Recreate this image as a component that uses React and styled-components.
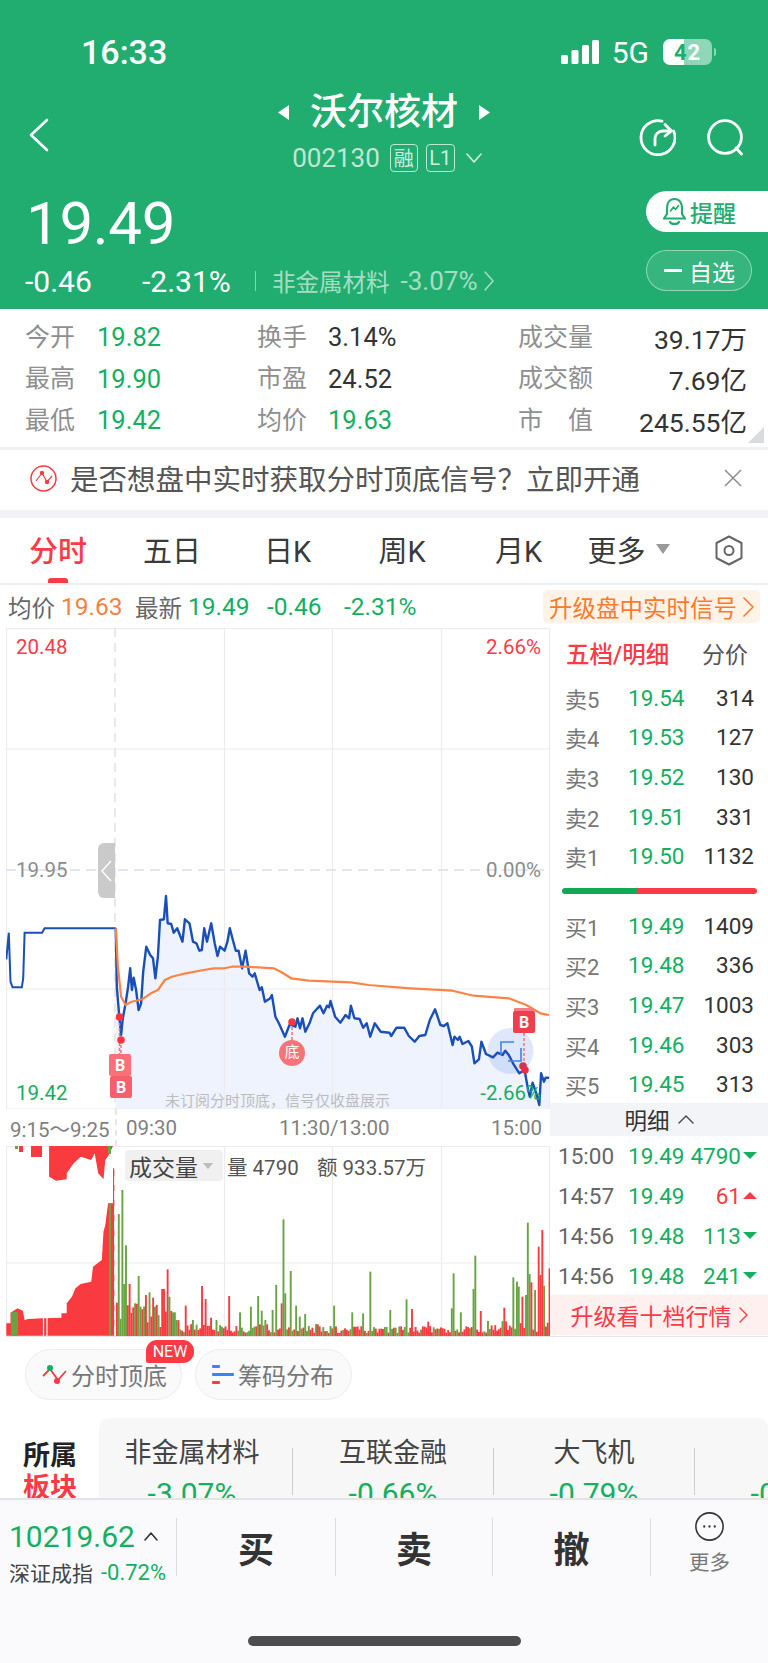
import React from "react";
import styled, { createGlobalStyle } from "styled-components";

const GREEN = "#12b05f";
const RED = "#fb3a46";
const HEADER = "#21ad70";

const GlobalStyle = createGlobalStyle`
  html, body { margin: 0; padding: 0; background: #fff; }
  body { font-family: Roboto, "Noto Sans CJK SC", sans-serif; }
`;

// chart traces, read off the 2.85x / 3x crop of the chart
const parse = (s) => s.trim().split(/\s+/).map((p) => p.split(",").map(Number));
const chartPt = ([x, y]) => `${(x / 2.85).toFixed(1)},${(900 + y / 3).toFixed(1)}`;
const volX = (x) => x / 2.85;
const volY = (y) => 1140 + y / 3;

const PRE = parse(`18,178 25,98 30,245 36,262 62,262 66,235 70,98 120,98 127,85 330,85`);
const MAIN = parse(`330,85 333,260 340,350 345,405 350,355 358,310 365,260 371,205 376,270 381,233 388,270 395,330 402,310
  408,215 417,140 428,165 436,175 443,235 450,170 456,60 467,58 473,-12 478,70 488,72 495,98 505,85 520,125 527,58 540,70
  550,125 560,130 568,152 575,150 582,85 590,125 602,70 612,130 620,168 627,140 640,152 648,125 655,85 665,125 672,152
  680,152 690,205 700,152 710,220 720,230 726,220 740,270 746,262 755,305 770,295 775,285 785,350 795,370 812,410 825,375
  830,375 842,380 848,355 855,385 862,355 870,395 882,370 892,340 905,325 912,317 922,340 932,317 938,322 942,303 955,350
  970,368 985,345 995,355 1000,317 1010,355 1025,357 1035,383 1045,370 1055,410 1068,370 1085,395 1110,398 1115,408
  1130,383 1152,383 1165,408 1182,425 1195,408 1212,405 1225,360 1240,328 1255,375 1265,378 1275,370 1290,435 1295,410
  1305,420 1310,410 1318,432 1335,423 1345,440 1352,490 1365,478 1372,425 1385,462 1405,472 1418,458 1432,465 1440,452
  1450,465 1462,490 1480,520 1495,510 1505,570 1510,590 1518,548 1530,585 1537,615 1542,520 1550,545 1555,533 1565,533`);
const AVG = parse(`330,85 336,200 345,290 358,315 375,305 405,298 430,280 450,270 470,240 490,230 530,220 580,210 610,205
  640,205 660,200 700,200 780,205 800,215 830,235 880,242 1000,247 1050,255 1170,265 1290,272 1350,287 1450,295 1500,315
  1540,340 1565,345`);

const SPIKES = parse(`335,222,g 345,150,g 355,316,g 350,432,g 365,432,r 380,490,g 395,408,g 415,465,r 423,457,g 432,473,r
  440,500,g 458,447,r 465,447,r 473,388,r 478,470,g 490,517,g 500,540,g 525,497,r 545,540,g 572,438,r 582,477,r 600,533,r
  612,540,g 653,468,r 683,517,g 710,500,g 735,468,g 745,512,g 755,540,g 773,510,g 787,435,g 798,490,r 807,238,g 812,460,g
  827,393,g 843,497,g 852,530,g 868,522,g 950,497,g 1003,517,g 1030,520,g 1055,395,g 1110,510,g 1157,478,g 1170,507,r
  1218,545,r 1285,505,g 1291,400,g 1310,517,g 1352,347,g 1348,447,g 1368,513,r 1388,543,g 1435,503,r 1460,412,g 1470,425,g
  1475,440,g 1485,470,r 1495,465,g 1502,248,g 1505,402,g 1512,427,r 1522,450,g 1532,320,r 1538,405,r 1543,270,r 1548,437,g
  1563,385,r`.replace(/,g/g, ",1").replace(/,r/g, ",0"));

const PRE_BOTTOM = parse(`18,587 18,550 30,550 30,518 50,505 65,512 70,540 80,537 120,535 175,533 175,520 190,520 190,490
  205,470 215,445 230,432 260,425 265,380 290,360 295,275 300,255 308,190 322,190 322,85 326,85 326,587`);
const PRE_TOP = parse(`140,18 140,110 160,122 190,118 190,100 210,70 230,50 260,60 270,40 280,100 295,118 300,60 310,45 322,18`);

function buildBars() {
  const bars = [];
  let seed = 11;
  const rnd = () => {
    seed = (seed * 9301 + 49297) % 233280;
    return seed / 233280;
  };
  for (let i = 0; i < 240; i++) {
    const x = 116 + i * 1.81;
    let base = 3 + rnd() * 9;
    if (i < 35) base = 8 + rnd() * 28;
    else if (i > 205) base = 3 + rnd() * 12;
    else if (i > 120) base = 3 + rnd() * 7;
    bars.push({ x, h: base, green: rnd() > 0.72 });
  }
  SPIKES.forEach(([zx, zy, g]) => {
    const i = Math.round((volX(zx) - 116) / 1.81);
    if (bars[i]) {
      bars[i].h = 1336 - volY(zy);
      bars[i].green = g === 1;
    }
  });
  return bars;
}
const BARS = buildBars();

const ASKS = [["卖5", "19.54", "314"], ["卖4", "19.53", "127"], ["卖3", "19.52", "130"], ["卖2", "19.51", "331"], ["卖1", "19.50", "1132"]];
const BIDS = [["买1", "19.49", "1409"], ["买2", "19.48", "336"], ["买3", "19.47", "1003"], ["买4", "19.46", "303"], ["买5", "19.45", "313"]];
const TRADES = [
  ["15:00", "19.49", "4790", false],
  ["14:57", "19.49", "61", true],
  ["14:56", "19.48", "113", false],
  ["14:56", "19.48", "241", false]
];
const SECTORS = [["非金属材料", "-3.07%"], ["互联金融", "-0.66%"], ["大飞机", "-0.79%"], ["", "-0.52%"]];

export default function App() {
  return (
    <Style.Page>
      <GlobalStyle />
      <Style.Header>
        <StatusBar />
        <NavBar />
        <Quote />
      </Style.Header>
      <Stats />
      <Banner />
      <Tabs />
      <InfoRow />
      <Style.Market>
        <Style.ChartColumn>
          <PriceChart />
          <Style.AxisRow>
            <span>9:15～9:25</span>
            <Style.AxisOpen>09:30</Style.AxisOpen>
            <span>11:30/13:00</span>
            <span>15:00</span>
          </Style.AxisRow>
          <VolumeChart />
        </Style.ChartColumn>
        <OrderBook />
      </Style.Market>
      <Tools />
      <Sectors />
      <Footer />
    </Style.Page>
  );
}

function StatusBar() {
  return (
    <Style.StatusBar>
      <Style.Clock>16:33</Style.Clock>
      <Style.StatusRight>
        <svg width="38" height="24" viewBox="0 0 38 24" fill="#fff">
          <rect x="0" y="15" width="7" height="9" rx="1.5" />
          <rect x="10.5" y="10" width="7" height="14" rx="1.5" />
          <rect x="21" y="5" width="7" height="19" rx="1.5" />
          <rect x="31" y="0" width="7" height="24" rx="1.5" />
        </svg>
        <Style.Network>5G</Style.Network>
        <Style.Battery>
          <Style.BatteryLevel $on>4</Style.BatteryLevel>
          <Style.BatteryLevel>2</Style.BatteryLevel>
        </Style.Battery>
        <Style.BatteryTip />
      </Style.StatusRight>
    </Style.StatusBar>
  );
}

function NavBar() {
  return (
    <Style.NavBar>
      <Style.NavLeft>
        <svg width="20" height="34" viewBox="0 0 20 34" fill="none" stroke="#fff" strokeWidth="2.6" strokeLinecap="round" strokeLinejoin="round">
          <path d="M18 2 2 17l16 15" />
        </svg>
      </Style.NavLeft>
      <Style.NavCenter>
        <Style.TitleRow>
          <svg width="11" height="15" viewBox="0 0 11 15" fill="#fff"><path d="M11 0v15L0 7.5z" /></svg>
          <Style.Title>沃尔核材</Style.Title>
          <svg width="11" height="15" viewBox="0 0 11 15" fill="#fff"><path d="M0 0v15l11-7.5z" /></svg>
        </Style.TitleRow>
        <Style.CodeRow>
          <Style.Code>002130</Style.Code>
          <Style.CodeBadge $width={28}>融</Style.CodeBadge>
          <Style.CodeBadge $width={29}>L1</Style.CodeBadge>
          <svg width="16" height="10" viewBox="0 0 16 10" fill="none" stroke="rgba(255,255,255,.8)" strokeWidth="1.6" strokeLinecap="round" strokeLinejoin="round">
            <path d="m1 1 7 8 7-8" />
          </svg>
        </Style.CodeRow>
      </Style.NavCenter>
      <Style.NavRight>
        <svg width="37" height="37" viewBox="0 0 37 37" fill="none" stroke="#fff" strokeWidth="2.8" strokeLinecap="round" strokeLinejoin="round">
          <path d="M23 2.200A17 17 0 1 0 34.600 12" />
          <path d="M16 26v-6.500a7.500 7.500 0 0 1 7.500-7.500H31" />
          <path d="M26 5.500 32.500 12 26 17" />
        </svg>
        <svg width="37" height="37" viewBox="0 0 37 37" fill="none" stroke="#fff" strokeWidth="2.8" strokeLinecap="round">
          <circle cx="18" cy="18" r="16.400" />
          <path d="m29 29 5.500 6" />
        </svg>
      </Style.NavRight>
    </Style.NavBar>
  );
}

function Quote() {
  return (
    <Style.Quote>
      <div>
        <Style.Price>19.49</Style.Price>
        <Style.ChangeRow>
          <Style.ChangeValue $width={117}>-0.46</Style.ChangeValue>
          <Style.ChangeValue $width={113}>-2.31%</Style.ChangeValue>
          <Style.ChangeRule />
          <Style.Industry>非金属材料</Style.Industry>
          <Style.IndustryPct>-3.07%</Style.IndustryPct>
          <svg width="10" height="20" viewBox="0 0 10 20" fill="none" stroke="rgba(255,255,255,.6)" strokeWidth="1.5" strokeLinecap="round" strokeLinejoin="round">
            <path d="m1 1 8 9-8 9" />
          </svg>
        </Style.ChangeRow>
      </div>
      <Style.PillColumn>
        <Style.RemindPill>
          <svg width="23" height="30" viewBox="0 0 23 30" fill="none" stroke={HEADER} strokeWidth="2.2" strokeLinecap="round" strokeLinejoin="round">
            <path d="M11.500 2C6.500 2 4 6 4 11v6l-3 4.500h21L19 17v-6c0-5-2.500-9-7.500-9z" />
            <path d="M7 25c1 2.500 8 2.500 9 0" />
            <path d="m7.500 14 3-4 2 2.500 3-4" strokeWidth="1.6" />
          </svg>
          提醒
        </Style.RemindPill>
        <Style.WatchPill>
          <Style.WatchDash />
          自选
        </Style.WatchPill>
      </Style.PillColumn>
    </Style.Quote>
  );
}

function Stats() {
  return (
    <Style.Stats>
      <Style.StatLabel>今开</Style.StatLabel>
      <Style.StatValue $green>19.82</Style.StatValue>
      <Style.StatLabel>换手</Style.StatLabel>
      <Style.StatValue>3.14%</Style.StatValue>
      <Style.StatLabel>成交量</Style.StatLabel>
      <Style.StatValue $right>39.17万</Style.StatValue>

      <Style.StatLabel>最高</Style.StatLabel>
      <Style.StatValue $green>19.90</Style.StatValue>
      <Style.StatLabel>市盈</Style.StatLabel>
      <Style.StatValue>24.52</Style.StatValue>
      <Style.StatLabel>成交额</Style.StatLabel>
      <Style.StatValue $right>7.69亿</Style.StatValue>

      <Style.StatLabel>最低</Style.StatLabel>
      <Style.StatValue $green>19.42</Style.StatValue>
      <Style.StatLabel>均价</Style.StatLabel>
      <Style.StatValue $green>19.63</Style.StatValue>
      <Style.StatLabel $spread>
        <span>市</span>
        <span>值</span>
      </Style.StatLabel>
      <Style.StatValue $right>245.55亿</Style.StatValue>
      <Style.CornerMark />
    </Style.Stats>
  );
}

function Banner() {
  return (
    <Style.Banner>
      <svg width="27" height="27" viewBox="0 0 27 27" fill="none" stroke={RED} strokeWidth="1.5">
        <circle cx="13.500" cy="13.500" r="12.500" />
        <path d="m6 16 6-8 5 9 5-6" strokeWidth="1.2" />
        <circle cx="12" cy="8" r="2.200" fill={RED} stroke="none" />
        <circle cx="17" cy="17" r="2.200" fill={RED} stroke="none" />
      </svg>
      <Style.BannerText>是否想盘中实时获取分时顶底信号？立即开通</Style.BannerText>
      <svg width="18" height="18" viewBox="0 0 18 18" fill="none" stroke="#8a8a8a" strokeWidth="1.500">
        <path d="m1 1 16 16M17 1 1 17" />
      </svg>
    </Style.Banner>
  );
}

function Tabs() {
  return (
    <Style.Tabs>
      <Style.Tab $width={116} $active>分时</Style.Tab>
      <Style.Tab $width={112}>五日</Style.Tab>
      <Style.Tab $width={119}>日K</Style.Tab>
      <Style.Tab $width={110}>周K</Style.Tab>
      <Style.Tab $width={123}>月K</Style.Tab>
      <Style.Tab $width={97}>
        更多
        <Style.TabCaret />
      </Style.Tab>
      <Style.TabIcon>
        <svg width="28" height="31" viewBox="0 0 28 31" fill="none" stroke="#666" strokeWidth="2" strokeLinejoin="round">
          <path d="M14 1.500 26.500 8v15L14 29.500 1.500 23V8z" />
          <circle cx="14" cy="15.500" r="4.500" />
        </svg>
      </Style.TabIcon>
    </Style.Tabs>
  );
}

function InfoRow() {
  return (
    <Style.InfoRow>
      <Style.InfoLabel>均价</Style.InfoLabel>
      <Style.InfoValue $color="#f5813d" $width={74}>19.63</Style.InfoValue>
      <Style.InfoLabel>最新</Style.InfoLabel>
      <Style.InfoValue $color={GREEN} $width={79}>19.49</Style.InfoValue>
      <Style.InfoValue $color={GREEN} $width={77}>-0.46</Style.InfoValue>
      <Style.InfoValue $color={GREEN} $width={80}>-2.31%</Style.InfoValue>
      <Style.UpgradeChip>
        升级盘中实时信号
        <svg width="11" height="20" viewBox="0 0 11 20" fill="none" stroke="#fb7a2c" strokeWidth="1.6" strokeLinecap="round" strokeLinejoin="round">
          <path d="m1 1 9 9-9 9" />
        </svg>
      </Style.UpgradeChip>
    </Style.InfoRow>
  );
}

function PriceChart() {
  const main = MAIN.map(chartPt).join(" ");
  return (
    <Style.ChartFrame>
      <svg width="544" height="481" viewBox="6 628 544 481" style={{ display: "block" }}>
        <polygon points={`115.500,1109 ${main} 549.500,1109`} fill="#eef3fe" />
        <g stroke="#ececee" strokeWidth="1.200" fill="none">
          <path d="M6.500 628v481M224.500 628v481M332.500 628v481M441.500 628v481M549.500 628v481" />
          <path d="M6 628.500h544M6 749h544M6 989h544M6 1109h544" />
        </g>
        <path d="M6 870h544" stroke="#d5e1ee" strokeWidth="1.300" strokeDasharray="10 6" fill="none" />
        <path d="M115 628v481" stroke="#e2e2e4" strokeWidth="1.500" strokeDasharray="9 6" fill="none" />

        <circle cx="510.500" cy="1051" r="23" fill="#6f97ef" fillOpacity=".22" />
        <polyline points={PRE.map(chartPt).join(" ")} fill="none" stroke="#1a4fb8" strokeWidth="2" />
        <polyline points={main} fill="none" stroke="#1a4fb8" strokeWidth="2.400" strokeLinejoin="round" />
        <polyline points={AVG.map(chartPt).join(" ")} fill="none" stroke="#fb8445" strokeWidth="2.200" strokeLinejoin="round" />
        <path d="M501 1055v-13h13M508 1061h13v-13" fill="none" stroke="#3b82f6" strokeWidth="1.600" />

        <path d="M119.500 1023v32M121 1040v15M292 1022v25M524 1033v34" stroke="#f2727f" strokeWidth="1.500" strokeDasharray="3 2" fill="none" />
        <circle cx="119.500" cy="1017" r="3.800" fill="#f8353f" />
        <circle cx="121" cy="1040" r="3.800" fill="#f8353f" />
        <circle cx="292" cy="1022" r="3.800" fill="#f8353f" />
        <circle cx="523" cy="1066" r="3.800" fill="#d33350" />
        <circle cx="525" cy="1070" r="3.800" fill="#ea2f45" />
        <circle cx="292" cy="1053" r="13" fill="#f87276" />
      </svg>
      <Style.Flag $x={109} $y={1054} $fade>B</Style.Flag>
      <Style.Flag $x={110} $y={1076}>B</Style.Flag>
      <Style.Flag $x={513} $y={1011} $strong>B</Style.Flag>
      <Style.BottomMark>底</Style.BottomMark>
      <Style.ChartLabel $left={16} $center={647} $color={RED}>20.48</Style.ChartLabel>
      <Style.ChartLabel $right={541} $center={647} $color={RED}>2.66%</Style.ChartLabel>
      <Style.ChartLabel $left={16} $center={870} $color="#8c8c8c">19.95</Style.ChartLabel>
      <Style.ChartLabel $right={541} $center={870} $color="#8c8c8c">0.00%</Style.ChartLabel>
      <Style.ChartLabel $left={16} $center={1093} $color={GREEN}>19.42</Style.ChartLabel>
      <Style.ChartLabel $right={541} $center={1093} $color={GREEN}>-2.66%</Style.ChartLabel>
      <Style.ChartNote>未订阅分时顶底，信号仅收盘展示</Style.ChartNote>
      <Style.CollapseHandle>
        <svg width="11" height="22" viewBox="0 0 11 22" fill="none" stroke="#fff" strokeWidth="1.500">
          <path d="M10 1 1 11l9 10" />
        </svg>
      </Style.CollapseHandle>
    </Style.ChartFrame>
  );
}

function VolumeChart() {
  const toVol = ([x, y]) => `${volX(x).toFixed(1)},${volY(y).toFixed(1)}`;
  return (
    <Style.VolumeFrame>
      <svg width="544" height="190" viewBox="6 1146 544 190" style={{ display: "block" }}>
        <g stroke="#ececee" strokeWidth="1.200" fill="none">
          <path d="M6.500 1146v190M224.500 1146v190M332.500 1146v190M441.500 1146v190M549.500 1146v190" />
          <path d="M6 1146.500h544M6 1263h544M6 1336h544" />
        </g>
        <polygon points={PRE_BOTTOM.map(toVol).join(" ")} fill="#f93a3e" />
        <polygon points={PRE_TOP.map(toVol).join(" ")} fill="#f93a3e" />
        <path d="M19 1146h4v6h-4zM31 1146h11v11H31z" fill="#f93a3e" />
        <path d="M15 1146h3v3h-3zM108 1146h3v8h-3z" fill="#68a442" />
        <path d="M109 1203h2v132h-2zM11 1312h7v24h-7zM13 1318h4v17h-4z" fill="#68a442" />
        <path d="M43.500 1318v18M47 1318v18" stroke="#fff" strokeWidth="1.200" fill="none" />
        {BARS.map((b) => (
          <rect key={b.x} x={b.x} y={1336 - b.h} width="1.900" height={b.h} fill={b.green ? "#68a442" : "#f93a3e"} />
        ))}
        <path d="M115 1146v190" stroke="#fff" strokeWidth="1.500" strokeDasharray="9 6" fill="none" />
      </svg>
      <Style.VolumeLegend>
        <Style.VolumeChip>
          成交量
          <Style.VolumeCaret />
        </Style.VolumeChip>
        <Style.VolumeStat $width={86}>量 4790</Style.VolumeStat>
        <Style.VolumeStat>额 933.57万</Style.VolumeStat>
      </Style.VolumeLegend>
    </Style.VolumeFrame>
  );
}

function BookRow({ row }) {
  return (
    <Style.BookRow>
      <Style.BookLabel>{row[0]}</Style.BookLabel>
      <Style.BookPrice>{row[1]}</Style.BookPrice>
      <Style.BookSize>{row[2]}</Style.BookSize>
    </Style.BookRow>
  );
}

function OrderBook() {
  return (
    <Style.Book>
      <Style.BookHeader>
        <Style.BookTitle>五档/明细</Style.BookTitle>
        <Style.BookSwitch>分价</Style.BookSwitch>
      </Style.BookHeader>
      {ASKS.map((row) => <BookRow key={row[0]} row={row} />)}
      <Style.RatioWrap><Style.RatioBar /></Style.RatioWrap>
      {BIDS.map((row) => <BookRow key={row[0]} row={row} />)}
      <Style.DetailBar>
        明细
        <svg width="16" height="9" viewBox="0 0 16 9" fill="none" stroke="#444" strokeWidth="1.400" strokeLinecap="round" strokeLinejoin="round">
          <path d="m1 8 7-7 7 7" />
        </svg>
      </Style.DetailBar>
      {TRADES.map(([time, price, size, up], i) => (
        <Style.TradeRow key={i}>
          <Style.TradeTime>{time}</Style.TradeTime>
          <Style.BookPrice>{price}</Style.BookPrice>
          <Style.TradeSize $up={up}>{size}</Style.TradeSize>
          <Style.TradeArrow $up={up} />
        </Style.TradeRow>
      ))}
      <Style.UpgradeBar>
        升级看十档行情
        <svg width="9" height="16" viewBox="0 0 9 16" fill="none" stroke={RED} strokeWidth="1.400" strokeLinecap="round" strokeLinejoin="round">
          <path d="m1 1 7 7-7 7" />
        </svg>
      </Style.UpgradeBar>
    </Style.Book>
  );
}

function Tools() {
  return (
    <Style.Tools>
      <Style.ToolChip>
        <svg width="25" height="22" viewBox="0 0 25 22" fill="none" strokeWidth="1.800">
          <path d="m1 12 7-7 8 11 8-9" stroke={RED} />
          <circle cx="8" cy="4" r="3" fill={GREEN} />
          <circle cx="15" cy="17" r="3" fill={RED} />
        </svg>
        分时顶底
        <Style.NewBadge>NEW</Style.NewBadge>
      </Style.ToolChip>
      <Style.ToolChip>
        <svg width="22" height="20" viewBox="0 0 22 20" fill="none">
          <rect x="0" y="0" width="8" height="3" rx="1" fill="#3b82f6" />
          <rect x="0" y="8" width="22" height="3" rx="1" fill="#3b82f6" />
          <rect x="0" y="16" width="8" height="3" rx="1" fill={RED} />
        </svg>
        筹码分布
      </Style.ToolChip>
    </Style.Tools>
  );
}

function Sectors() {
  return (
    <Style.Sectors>
      <Style.SectorTitle>
        <div>所属</div>
        <Style.SectorTitleRed>板块</Style.SectorTitleRed>
      </Style.SectorTitle>
      <Style.SectorCard>
        <Style.SectorTrack>
          {SECTORS.map(([name, pct], i) => (
            <React.Fragment key={i}>
              <Style.SectorItem>
                <Style.SectorName>{name || "\u00a0"}</Style.SectorName>
                <Style.SectorPct>{pct}</Style.SectorPct>
              </Style.SectorItem>
              <Style.SectorRule />
            </React.Fragment>
          ))}
        </Style.SectorTrack>
      </Style.SectorCard>
    </Style.Sectors>
  );
}

function Footer() {
  return (
    <Style.Footer>
      <Style.FooterBar>
        <Style.IndexCell>
          <Style.IndexTop>
            10219.62
            <svg width="14" height="9" viewBox="0 0 14 9" fill="none" stroke="#333" strokeWidth="1.600" strokeLinecap="round" strokeLinejoin="round">
              <path d="m1 8 6-7 6 7" />
            </svg>
          </Style.IndexTop>
          <Style.IndexBottom>
            深证成指
            <Style.IndexPct>-0.72%</Style.IndexPct>
          </Style.IndexBottom>
        </Style.IndexCell>
        <Style.ActionCell $width={159}>买</Style.ActionCell>
        <Style.ActionCell $width={157}>卖</Style.ActionCell>
        <Style.ActionCell $width={158}>撤</Style.ActionCell>
        <Style.MoreCell>
          <svg width="33" height="33" viewBox="0 0 33 33" fill="none" stroke="#333" strokeWidth="1.800">
            <circle cx="16.500" cy="16.500" r="15.500" />
            <circle cx="10.500" cy="16.500" r="1.300" fill="#333" stroke="none" />
            <circle cx="16.500" cy="16.500" r="1.300" fill="#333" stroke="none" />
            <circle cx="22.500" cy="16.500" r="1.300" fill="#333" stroke="none" />
          </svg>
          <Style.MoreLabel>更多</Style.MoreLabel>
        </Style.MoreCell>
      </Style.FooterBar>
      <Style.HomeIndicator />
    </Style.Footer>
  );
}

const Style = {
  Page: styled.div`
    width: 768px;
    height: 1663px;
    overflow: hidden;
    display: flex;
    flex-direction: column;
    background: #fff;
    color: #333;
  `,
  Header: styled.div`
    height: 309px;
    flex: none;
    background: ${HEADER};
    color: #fff;
  `,
  StatusBar: styled.div`
    height: 90px;
    box-sizing: border-box;
    padding: 35px 0 0 81px;
    display: flex;
    justify-content: space-between;
  `,
  Clock: styled.div`
    font-size: 34px;
    line-height: 34px;
    font-weight: 500;
  `,
  StatusRight: styled.div`
    display: flex;
    align-items: center;
    height: 34px;
    margin-right: 52px;
    & > svg { margin-right: 13px; }
  `,
  Network: styled.div`
    font-size: 30px;
    margin-right: 14px;
  `,
  Battery: styled.div`
    width: 49px;
    height: 26px;
    border-radius: 7px;
    background: linear-gradient(90deg, #fff 42%, rgba(255, 255, 255, 0.5) 42%);
    display: flex;
    justify-content: center;
    align-items: center;
    font-size: 22px;
    font-weight: 700;
    letter-spacing: 1px;
  `,
  BatteryLevel: styled.span`
    color: ${(p) => (p.$on ? HEADER : "#fff")};
  `,
  BatteryTip: styled.div`
    width: 2px;
    height: 8px;
    margin-left: 2px;
    border-radius: 0 2px 2px 0;
    background: rgba(255, 255, 255, 0.5);
  `,
  NavBar: styled.div`
    height: 91px;
    display: grid;
    grid-template-columns: 1fr auto 1fr;
    align-items: center;
  `,
  NavLeft: styled.div`
    padding: 3px 0 0 29px;
  `,
  NavRight: styled.div`
    display: flex;
    justify-content: flex-end;
    gap: 31px;
    padding: 3px 24px 0 0;
  `,
  NavCenter: styled.div`
    display: flex;
    flex-direction: column;
    align-items: center;
  `,
  TitleRow: styled.div`
    display: flex;
    align-items: center;
    gap: 21px;
    height: 44px;
  `,
  Title: styled.div`
    font-size: 37px;
    line-height: 44px;
    font-weight: 500;
  `,
  CodeRow: styled.div`
    display: flex;
    align-items: center;
    gap: 8px;
    height: 46px;
    padding-left: 6px;
    & > svg { margin-left: 3px; }
  `,
  Code: styled.div`
    font-size: 26px;
    color: rgba(255, 255, 255, 0.72);
    margin-right: 2px;
  `,
  CodeBadge: styled.div`
    width: ${(p) => p.$width}px;
    height: 28px;
    box-sizing: border-box;
    border: 1px solid rgba(255, 255, 255, 0.7);
    border-radius: 4px;
    display: flex;
    align-items: center;
    justify-content: center;
    font-size: 20px;
    color: rgba(255, 255, 255, 0.8);
  `,
  Quote: styled.div`
    height: 128px;
    box-sizing: border-box;
    padding: 8px 0 0 25px;
    display: flex;
    justify-content: space-between;
  `,
  Price: styled.div`
    font-size: 60px;
    line-height: 70px;
    padding-left: 1px;
    letter-spacing: -0.3px;
  `,
  ChangeRow: styled.div`
    height: 44px;
    display: flex;
    align-items: center;
  `,
  ChangeValue: styled.div`
    width: ${(p) => p.$width}px;
    font-size: 30px;
  `,
  ChangeRule: styled.div`
    width: 1px;
    height: 20px;
    background: rgba(255, 255, 255, 0.45);
    margin-right: 16px;
  `,
  Industry: styled.div`
    font-size: 23.5px;
    color: rgba(255, 255, 255, 0.6);
    margin-right: 11px;
  `,
  IndustryPct: styled.div`
    font-size: 26px;
    color: rgba(255, 255, 255, 0.6);
    margin-right: 7px;
  `,
  PillColumn: styled.div`
    width: 122px;
    padding-top: 2px;
    display: flex;
    flex-direction: column;
    gap: 18px;
  `,
  RemindPill: styled.div`
    height: 41px;
    box-sizing: border-box;
    padding-left: 17px;
    background: #fff;
    border-radius: 21px 0 0 21px;
    display: flex;
    align-items: center;
    gap: 4px;
    font-size: 23px;
    font-weight: 500;
    color: ${HEADER};
  `,
  WatchPill: styled.div`
    width: 106px;
    height: 41px;
    box-sizing: border-box;
    padding-left: 17px;
    border: 1px solid rgba(255, 255, 255, 0.45);
    background: rgba(255, 255, 255, 0.1);
    border-radius: 21px;
    display: flex;
    align-items: center;
    font-size: 23px;
    color: #fff;
  `,
  WatchDash: styled.span`
    width: 18px;
    height: 3px;
    margin-right: 7px;
    background: #fff;
  `,
  Stats: styled.div`
    position: relative;
    height: 141px;
    flex: none;
    box-sizing: border-box;
    padding: 7px 21px 0 25px;
    display: grid;
    grid-template-columns: 72px 160px 71px 190px 90px 1fr;
    grid-auto-rows: 41.5px;
    align-items: center;
    border-bottom: 3px solid #f1f2f5;
  `,
  StatLabel: styled.div`
    font-size: 25px;
    color: #8f8f8f;
    width: 75px;
    padding-bottom: 4px;
    display: flex;
    justify-content: ${(p) => (p.$spread ? "space-between" : "flex-start")};
    white-space: nowrap;
  `,
  StatValue: styled.div`
    font-size: ${(p) => (p.$right ? 26.5 : 25.5)}px;
    padding-top: 1px;
    white-space: nowrap;
    text-align: ${(p) => (p.$right ? "right" : "left")};
    color: ${(p) => (p.$green ? GREEN : "#333")};
  `,
  CornerMark: styled.div`
    position: absolute;
    right: 4px;
    bottom: 4px;
    width: 16px;
    height: 16px;
    background: #d9dbde;
    clip-path: polygon(100% 0, 100% 100%, 0 100%);
  `,
  Banner: styled.div`
    height: 60px;
    flex: none;
    box-sizing: border-box;
    padding: 0 26px 4px 30px;
    display: flex;
    align-items: center;
  `,
  BannerText: styled.div`
    flex: 1;
    margin: -2px 0 0 13px;
    font-size: 28.5px;
    color: #555;
    white-space: nowrap;
  `,
  Tabs: styled.div`
    height: 75px;
    flex: none;
    box-sizing: border-box;
    display: flex;
    align-items: center;
    border-top: 8px solid #f1f3f6;
    border-bottom: 2px solid #eeeff1;
  `,
  Tab: styled.div`
    position: relative;
    width: ${(p) => p.$width}px;
    height: 65px;
    box-sizing: border-box;
    padding-bottom: 4px;
    display: flex;
    align-items: center;
    justify-content: center;
    font-size: 29px;
    color: ${(p) => (p.$active ? RED : "#3a3a3a")};
    font-weight: ${(p) => (p.$active ? 500 : 400)};
    ${(p) =>
      p.$active &&
      `&::after {
        content: "";
        position: absolute;
        left: 48px;
        bottom: 0;
        width: 20px;
        height: 5px;
        border-radius: 3px 3px 0 0;
        background: ${RED};
      }`}
  `,
  TabCaret: styled.span`
    width: 0;
    height: 0;
    margin-left: 10px;
    border-left: 7px solid transparent;
    border-right: 7px solid transparent;
    border-top: 10px solid #999;
  `,
  TabIcon: styled.div`
    margin-left: 38px;
    display: flex;
  `,
  InfoRow: styled.div`
    height: 43px;
    flex: none;
    box-sizing: border-box;
    padding: 0 8px 0 8px;
    display: flex;
    align-items: center;
  `,
  InfoLabel: styled.div`
    width: 53px;
    font-size: 23.5px;
    color: #666;
    white-space: nowrap;
  `,
  InfoValue: styled.div`
    width: ${(p) => p.$width}px;
    font-size: 24.5px;
    color: ${(p) => p.$color};
    white-space: nowrap;
  `,
  UpgradeChip: styled.div`
    margin-left: auto;
    height: 33px;
    width: 217px;
    box-sizing: border-box;
    padding: 0 6px;
    background: #fff3e8;
    border-radius: 5px;
    display: flex;
    align-items: center;
    justify-content: space-between;
    font-size: 23.5px;
    color: #fb7a2c;
    white-space: nowrap;
  `,
  Market: styled.div`
    height: 708px;
    flex: none;
    display: flex;
  `,
  ChartColumn: styled.div`
    width: 544px;
    margin-left: 6px;
    flex: none;
  `,
  ChartFrame: styled.div`
    position: relative;
    height: 481px;
  `,
  ChartLabel: styled.div`
    position: absolute;
    top: ${(p) => p.$center - 628 - 12}px;
    ${(p) => (p.$left !== undefined ? `left: ${p.$left - 6}px;` : `right: ${550 - p.$right}px;`)}
    line-height: 24px;
    font-size: 20.5px;
    color: ${(p) => p.$color};
  `,
  ChartNote: styled.div`
    position: absolute;
    left: 159px;
    top: 463px;
    line-height: 20px;
    font-size: 15px;
    color: #bdbdbd;
    white-space: nowrap;
  `,
  Flag: styled.div`
    position: absolute;
    left: ${(p) => p.$x - 6}px;
    top: ${(p) => p.$y - 628}px;
    width: 22px;
    height: 22px;
    border-radius: 2px;
    background: ${(p) => (p.$strong ? "#ef3f4e" : p.$fade ? "#fa6f78" : "#f85f6a")};
    color: #fff;
    font-size: 16px;
    font-weight: 700;
    display: flex;
    align-items: center;
    justify-content: center;
    ${(p) => p.$strong && `box-shadow: 0 -4px 0 -1px #f57c86;`}
  `,
  BottomMark: styled.div`
    position: absolute;
    left: 273px;
    top: 412px;
    width: 26px;
    height: 26px;
    line-height: 25px;
    text-align: center;
    font-size: 15px;
    color: #fff;
  `,
  CollapseHandle: styled.div`
    position: absolute;
    left: 92px;
    top: 215px;
    width: 17px;
    height: 55px;
    border-radius: 6px 0 0 6px;
    background: #cacaca;
    display: flex;
    align-items: center;
    justify-content: center;
  `,
  AxisRow: styled.div`
    height: 37px;
    box-sizing: border-box;
    padding-left: 4px;
    display: grid;
    grid-template-columns: 105px 164px 212px 1fr;
    align-items: center;
    font-size: 20.5px;
    color: #7f7f7f;
    white-space: nowrap;
  `,
  AxisOpen: styled.span`
    align-self: stretch;
    display: flex;
    align-items: center;
    padding-left: 9px;
    border-left: 2px dashed #e6e6e6;
  `,
  VolumeFrame: styled.div`
    position: relative;
    height: 190px;
  `,
  VolumeLegend: styled.div`
    position: absolute;
    left: 119px;
    top: 4px;
    display: flex;
    align-items: center;
    gap: 4px;
  `,
  VolumeChip: styled.div`
    width: 98px;
    height: 31px;
    box-sizing: border-box;
    padding-left: 4px;
    border-radius: 4px;
    background: #f0f0f0;
    display: flex;
    align-items: center;
    font-size: 23px;
    color: #444;
  `,
  VolumeCaret: styled.span`
    width: 0;
    height: 0;
    margin-left: 5px;
    border-left: 5px solid transparent;
    border-right: 5px solid transparent;
    border-top: 6px solid #bbb;
  `,
  VolumeStat: styled.div`
    ${(p) => p.$width && `width: ${p.$width}px;`}
    font-size: 20.5px;
    color: #555;
    white-space: nowrap;
  `,
  Book: styled.div`
    width: 218px;
    flex: none;
  `,
  BookHeader: styled.div`
    height: 50px;
    box-sizing: border-box;
    padding: 0 20px 0 16px;
    display: flex;
    align-items: center;
    justify-content: space-between;
  `,
  BookTitle: styled.div`
    font-size: 23.5px;
    color: ${RED};
    font-weight: 500;
  `,
  BookSwitch: styled.div`
    font-size: 23px;
    color: #555;
  `,
  BookRow: styled.div`
    height: 39.6px;
    box-sizing: border-box;
    padding: 0 14px 0 15px;
    display: grid;
    grid-template-columns: 63px 1fr auto;
    align-items: center;
  `,
  BookLabel: styled.div`
    font-size: 22px;
    color: #777;
    white-space: nowrap;
  `,
  BookPrice: styled.div`
    font-size: 22.5px;
    color: ${GREEN};
  `,
  BookSize: styled.div`
    font-size: 22.5px;
    color: #333;
    text-align: right;
  `,
  RatioWrap: styled.div`
    height: 30px;
    padding: 12px 11px 0 12px;
    box-sizing: border-box;
  `,
  RatioBar: styled.div`
    height: 6px;
    border-radius: 3px;
    background: linear-gradient(100deg, #0fa958 38%, #fb3a46 39%);
  `,
  DetailBar: styled.div`
    height: 33px;
    margin-top: -1px;
    background: #f3f4f8;
    display: flex;
    align-items: center;
    justify-content: center;
    gap: 8px;
    font-size: 22.5px;
    color: #333;
  `,
  TradeRow: styled.div`
    height: 40px;
    box-sizing: border-box;
    padding: 0 11px 0 8px;
    display: grid;
    grid-template-columns: 70px 56px 1fr 16px;
    align-items: center;
  `,
  TradeTime: styled.div`
    font-size: 22.5px;
    color: #666;
  `,
  TradeSize: styled.div`
    font-size: 22.5px;
    text-align: right;
    color: ${(p) => (p.$up ? RED : GREEN)};
  `,
  TradeArrow: styled.span`
    justify-self: end;
    width: 0;
    height: 0;
    border-left: 7px solid transparent;
    border-right: 7px solid transparent;
    ${(p) => (p.$up ? `border-bottom: 7px solid ${RED};` : `border-top: 7px solid ${GREEN};`)}
  `,
  UpgradeBar: styled.div`
    height: 40px;
    margin-top: -1px;
    background: #fff0f0;
    display: flex;
    align-items: center;
    justify-content: center;
    gap: 7px;
    font-size: 23px;
    color: ${RED};
    white-space: nowrap;
  `,
  Tools: styled.div`
    height: 82px;
    flex: none;
    box-sizing: border-box;
    margin-left: 6px;
    padding: 12px 0 0 19px;
    border-top: 1px solid #e6e6e6;
    display: flex;
    gap: 13px;
  `,
  ToolChip: styled.div`
    position: relative;
    width: 157px;
    height: 51px;
    box-sizing: border-box;
    padding-left: 16px;
    border: 1px solid #ececec;
    border-radius: 26px;
    background: #fafafa;
    display: flex;
    align-items: center;
    gap: 4px;
    font-size: 24px;
    color: #777;
    white-space: nowrap;
  `,
  NewBadge: styled.span`
    position: absolute;
    left: 120px;
    top: -10px;
    width: 48px;
    height: 23px;
    border-radius: 11px 11px 11px 2px;
    background: ${RED};
    color: #fff;
    font-size: 16px;
    line-height: 23px;
    text-align: center;
  `,
  Sectors: styled.div`
    flex: 1;
    min-height: 0;
    display: flex;
    overflow: hidden;
  `,
  SectorTitle: styled.div`
    width: 99px;
    flex: none;
    box-sizing: border-box;
    padding: 22px 0 0 23px;
    font-size: 27px;
    line-height: 32px;
    font-weight: 700;
    color: #222;
  `,
  SectorTitleRed: styled.div`
    color: ${RED};
  `,
  SectorCard: styled.div`
    flex: 1;
    min-width: 0;
    overflow: hidden;
    background: #f7f7f7;
    border-radius: 10px 10px 0 0;
  `,
  SectorTrack: styled.div`
    display: flex;
    align-items: flex-start;
    margin-left: -7px;
  `,
  SectorItem: styled.div`
    width: 200px;
    flex: none;
    padding-top: 17px;
    text-align: center;
  `,
  SectorName: styled.div`
    font-size: 27px;
    line-height: 36px;
    color: #444;
  `,
  SectorPct: styled.div`
    font-size: 30px;
    line-height: 36px;
    margin-top: 5px;
    color: ${GREEN};
  `,
  SectorRule: styled.div`
    width: 1px;
    height: 47px;
    flex: none;
    margin-top: 30px;
    background: #ccc;
  `,
  Footer: styled.div`
    height: 165px;
    flex: none;
    box-sizing: border-box;
    border-top: 2px solid #e4e4e8;
    background: #fafafc;
    position: relative;
  `,
  FooterBar: styled.div`
    padding-top: 18px;
    display: flex;
  `,
  IndexCell: styled.div`
    width: 176px;
    height: 58px;
    flex: none;
    box-sizing: border-box;
    padding-left: 9px;
  `,
  IndexTop: styled.div`
    height: 36px;
    display: flex;
    align-items: center;
    gap: 9px;
    font-size: 30px;
    color: ${GREEN};
  `,
  IndexBottom: styled.div`
    height: 36px;
    display: flex;
    align-items: center;
    gap: 8px;
    font-size: 21px;
    color: #444;
    white-space: nowrap;
  `,
  IndexPct: styled.span`
    font-size: 22px;
    color: ${GREEN};
  `,
  ActionCell: styled.div`
    width: ${(p) => p.$width}px;
    height: 58px;
    flex: none;
    box-sizing: border-box;
    border-left: 1px solid #dcdcde;
    display: flex;
    align-items: center;
    justify-content: center;
    font-size: 36px;
    font-weight: 700;
    color: #333;
  `,
  MoreCell: styled.div`
    flex: 1;
    height: 58px;
    border-left: 1px solid #dcdcde;
    display: flex;
    flex-direction: column;
    align-items: center;
    & > svg { margin-top: -6px; }
  `,
  MoreLabel: styled.div`
    margin-top: 9px;
    font-size: 20.5px;
    line-height: 26px;
    color: #777;
  `,
  HomeIndicator: styled.div`
    position: absolute;
    left: 248px;
    top: 136px;
    width: 273px;
    height: 10px;
    border-radius: 5px;
    background: #4d4d50;
  `
};
